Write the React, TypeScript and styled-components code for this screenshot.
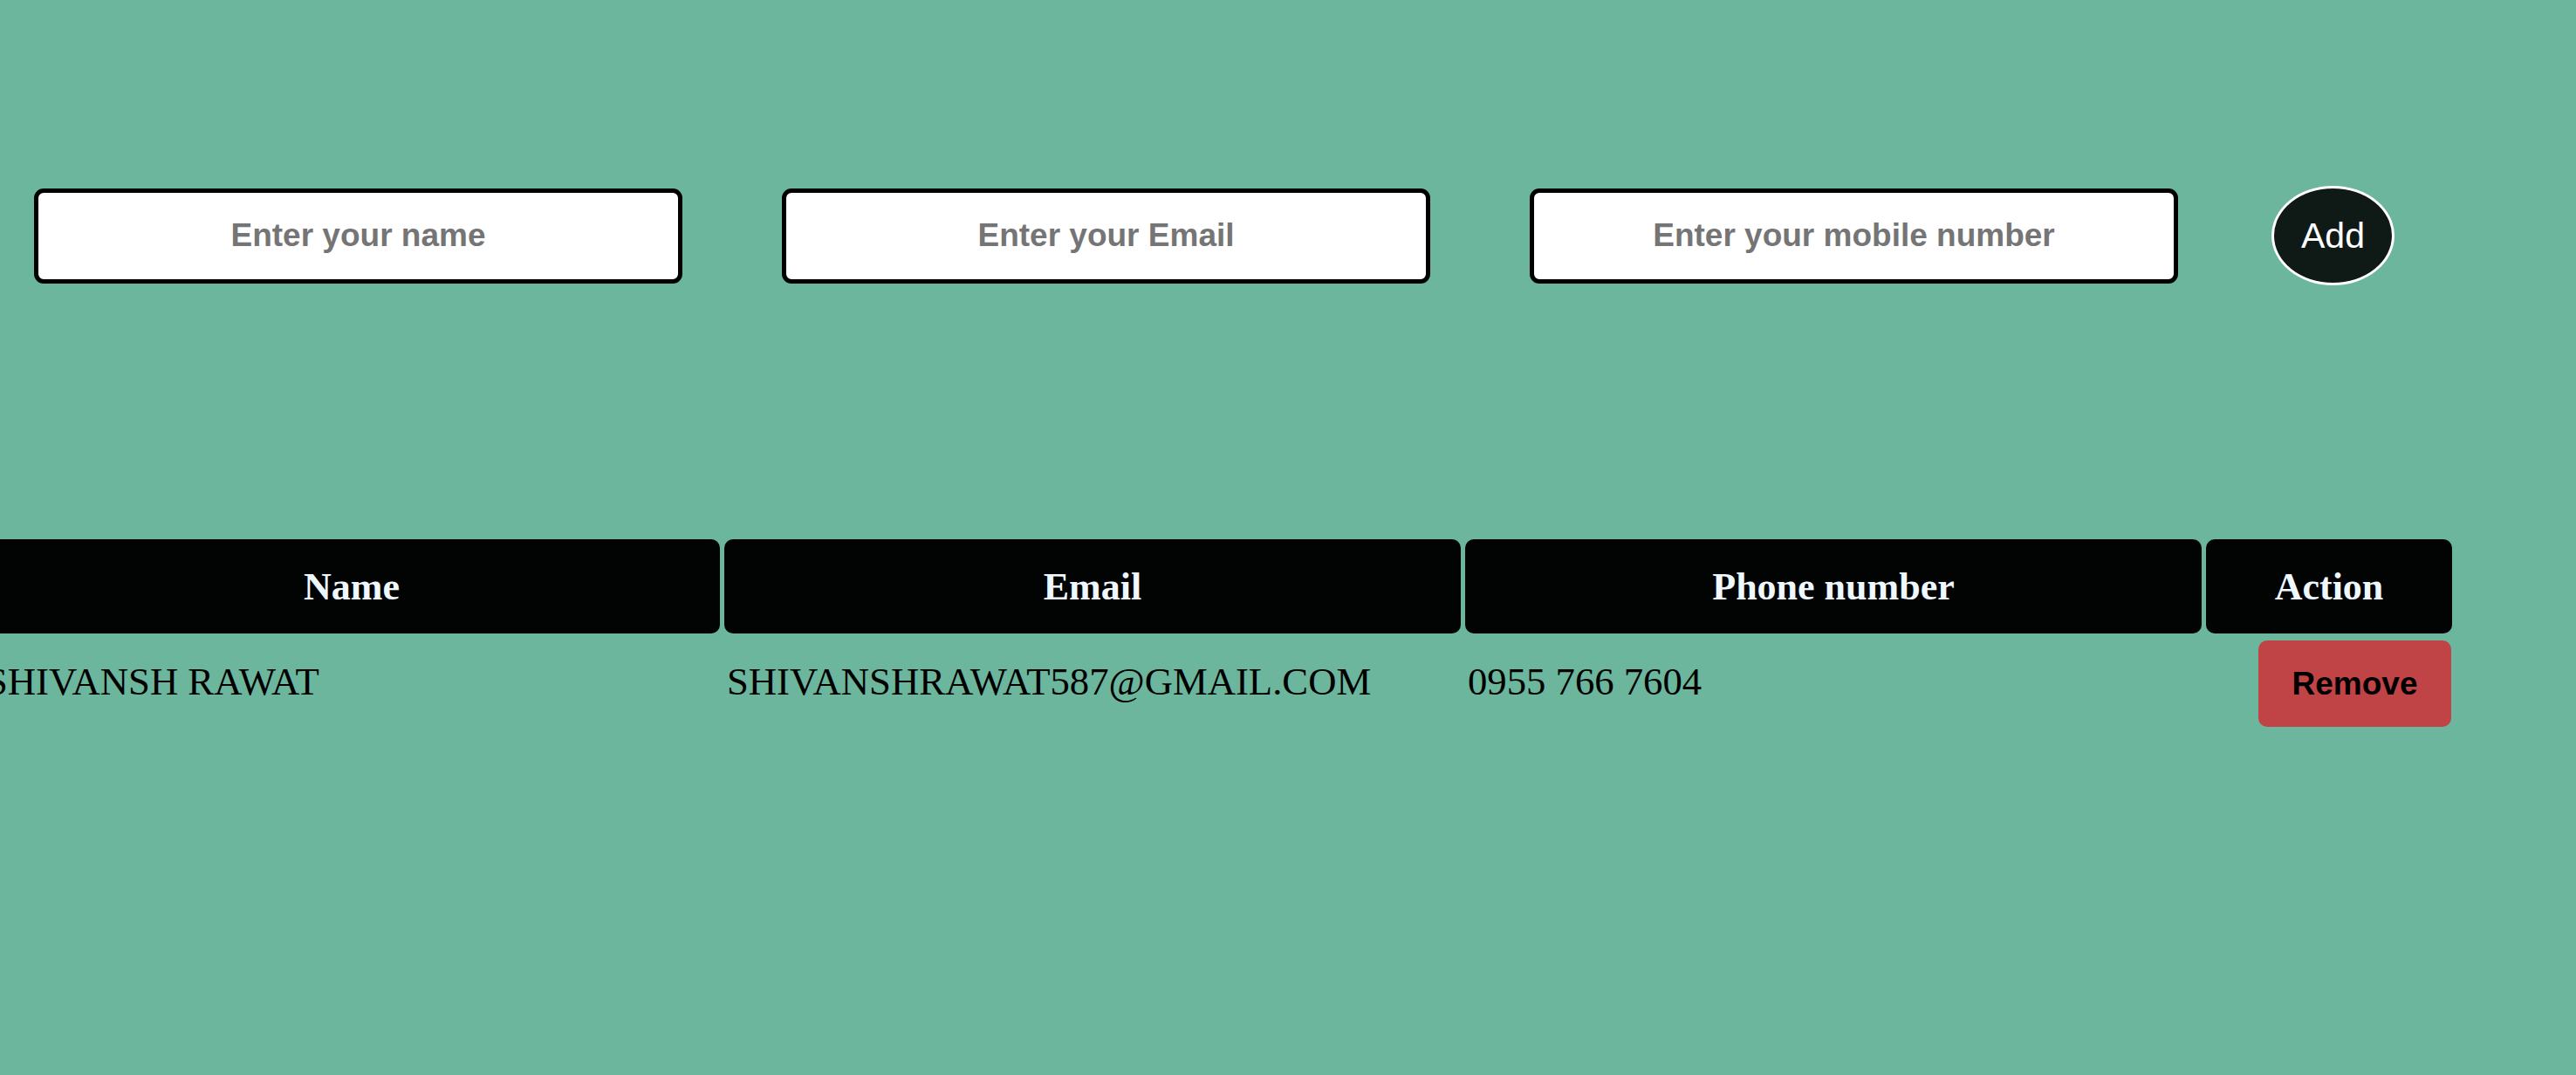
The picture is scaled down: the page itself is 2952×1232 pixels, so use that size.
import React from "react";
import styled, { createGlobalStyle } from "styled-components";

const GlobalStyle = createGlobalStyle`
  html, body {
    margin: 0;
    padding: 0;
    background: #6bb69d;
    overflow: hidden;
  }
  * { box-sizing: border-box; }
`;

const Page = styled.div`
  width: 100%;
  min-height: 100vh;
  background: #6bb69d;
  padding-top: 213px;
  overflow: hidden;
  font-family: "Liberation Serif", "Times New Roman", serif;
`;

const Form = styled.form`
  display: flex;
  align-items: center;
  gap: 114px;
  padding-left: 39px;
`;

const TextInput = styled.input`
  width: 743px;
  height: 109px;
  border: 5px solid #000;
  border-radius: 11px;
  background: #fff;
  font-family: "Liberation Sans", Arial, sans-serif;
  font-weight: 700;
  font-size: 37px;
  text-align: center;
  color: #222;
  outline: none;
  &::placeholder {
    color: #757575;
    opacity: 1;
  }
`;

const AddButton = styled.button`
  width: 141px;
  height: 114px;
  margin-left: -7px;
  border: 3px solid #fff;
  border-radius: 50%;
  background: #0f1a16;
  color: #fff;
  font-family: "Liberation Sans", Arial, sans-serif;
  font-size: 41px;
  cursor: pointer;
`;

const Table = styled.div`
  display: grid;
  grid-template-columns: 844px 844px 844px 282px;
  column-gap: 5px;
  row-gap: 8px;
  margin-top: 291px;
  margin-left: -19px;
`;

const HeadCell = styled.div`
  height: 108px;
  background: #010403;
  border-radius: 10px;
  color: #f0f8ff;
  font-family: "Liberation Serif", "Times New Roman", serif;
  font-weight: 700;
  font-size: 44px;
  display: flex;
  align-items: center;
  justify-content: center;
`;

const Cell = styled.div<{ $align?: "start" | "end" }>`
  min-height: 99px;
  display: flex;
  align-items: center;
  justify-content: ${(p) => (p.$align === "end" ? "flex-end" : "flex-start")};
  padding-left: 3px;
  padding-right: 1px;
  padding-bottom: ${(p) => (p.$align === "end" ? "0" : "6px")};
  font-family: "Liberation Serif", "Times New Roman", serif;
  font-size: 44.7px;
  color: #000;
  text-transform: uppercase;
  white-space: nowrap;
`;

const RemoveButton = styled.button`
  width: 221px;
  height: 99px;
  border: none;
  border-radius: 10px;
  background: #c04345;
  color: #000;
  font-family: "Liberation Sans", Arial, sans-serif;
  font-weight: 700;
  font-size: 37px;
  cursor: pointer;
`;

const rows = [
  { name: "Shivansh Rawat", email: "shivanshrawat587@gmail.com", phone: "0955 766 7604" },
];

export default function App() {
  return (
    <>
      <GlobalStyle />
      <Page>
        <Form onSubmit={(e) => e.preventDefault()}>
          <TextInput placeholder="Enter your name" />
          <TextInput placeholder="Enter your Email" />
          <TextInput placeholder="Enter your mobile number" />
          <AddButton type="submit">Add</AddButton>
        </Form>
        <Table>
          <HeadCell>Name</HeadCell>
          <HeadCell>Email</HeadCell>
          <HeadCell>Phone number</HeadCell>
          <HeadCell>Action</HeadCell>
          {rows.map((r) => (
            <React.Fragment key={r.email}>
              <Cell>{r.name}</Cell>
              <Cell>{r.email}</Cell>
              <Cell>{r.phone}</Cell>
              <Cell $align="end">
                <RemoveButton type="button">Remove</RemoveButton>
              </Cell>
            </React.Fragment>
          ))}
        </Table>
      </Page>
    </>
  );
}
